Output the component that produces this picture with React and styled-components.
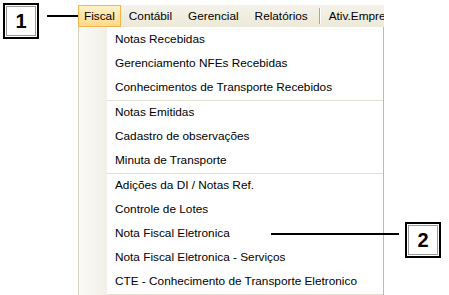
import React from "react";
import styled, { createGlobalStyle } from "styled-components";

const Global = createGlobalStyle`
  html, body { margin: 0; padding: 0; background: #fff; }
  body { font-family: "Liberation Sans", Arial, sans-serif; }
`;

const Page = styled.div`
  position: relative;
  width: 449px;
  height: 295px;
  overflow: hidden;
  background: #fff;
  padding: 5px 0 0 78px;
  box-sizing: border-box;
`;

const Window = styled.div`
  width: 306px;
  display: flex;
  flex-direction: column;
`;

const MenuBar = styled.div`
  height: 22px;
  display: flex;
  align-items: stretch;
  background: linear-gradient(#f4f2ea, #ece9d8);
  font-size: 11.8px;
  color: #000;
  overflow: hidden;
  white-space: nowrap;
`;

const BarItem = styled.div`
  display: flex;
  align-items: center;
  padding: 0 ${(p) => p.$pad ?? 8}px;
  box-sizing: border-box;
  flex-shrink: 0;
  ${(p) =>
    p.$active &&
    `
    border: 1px solid #f3b54a;
    background: linear-gradient(#fff2c8, #ffd98a);
  `}
`;

const BarSep = styled.div`
  width: 1px;
  flex-shrink: 0;
  margin: 3px 6px 3px 3px;
  background: #aca899;
  box-shadow: 1px 0 0 #fff;
`;

const Dropdown = styled.div`
  display: flex;
  border-left: 1px solid #d6d2c2;
  border-right: 1px solid #c2b8a8;
  height: 280px;
`;

const Gutter = styled.div`
  width: 28px;
  background: linear-gradient(90deg, #fbfaf6, #f1efe6);
`;

const Items = styled.div`
  flex: 1;
  background: #fff;
  display: flex;
  flex-direction: column;
  padding-top: 1px;
  font-size: 11.8px;
`;

const Item = styled.div`
  height: 24px;
  line-height: 23px;
  padding-left: 8px;
  color: #000;
  white-space: nowrap;
`;

const Sep = styled.div`
  height: 1px;
  flex-shrink: 0;
  background: #e3dfd2;
`;

const Callout = styled.div`
  position: absolute;
  left: ${(p) => p.$x}px;
  top: ${(p) => p.$y}px;
  width: 36px;
  height: 36px;
  box-sizing: border-box;
  border: 2px solid #000;
  outline: 1px solid #9a9a9a;
  outline-offset: -4px;
  background: #fff;
  display: flex;
  align-items: center;
  justify-content: center;
  font-family: "Liberation Sans", Arial, sans-serif;
  font-weight: bold;
  font-size: 20px;
  color: #000;
`;

const Leader = styled.div`
  position: absolute;
  left: ${(p) => p.$x}px;
  top: ${(p) => p.$y}px;
  width: ${(p) => p.$w}px;
  height: 2px;
  background: #000;
`;

const groups = [
  ["Notas Recebidas", "Gerenciamento NFEs Recebidas", "Conhecimentos de Transporte Recebidos"],
  ["Notas Emitidas", "Cadastro de observações", "Minuta de Transporte"],
  [
    "Adições da DI / Notas Ref.",
    "Controle de Lotes",
    "Nota Fiscal Eletronica",
    "Nota Fiscal Eletronica - Serviços",
    "CTE - Conhecimento de Transporte Eletronico",
  ],
];

export default function App() {
  return (
    <>
      <Global />
      <Page>
        <Window>
          <MenuBar>
            <BarItem $active $pad={5}>Fiscal</BarItem>
            <BarItem>Contábil</BarItem>
            <BarItem>Gerencial</BarItem>
            <BarItem>Relatórios</BarItem>
            <BarSep />
            <BarItem $pad={3}>Ativ.Empresariais</BarItem>
          </MenuBar>
          <Dropdown>
            <Gutter />
            <Items>
              {groups.map((g, gi) => (
                <React.Fragment key={gi}>
                  {gi > 0 && <Sep />}
                  {g.map((t) => (
                    <Item key={t}>{t}</Item>
                  ))}
                </React.Fragment>
              ))}
              <Sep />
            </Items>
          </Dropdown>
        </Window>
        <Callout $x={3} $y={3}>1</Callout>
        <Leader $x={47} $y={15} $w={31} />
        <Callout $x={405} $y={222}>2</Callout>
        <Leader $x={271} $y={233} $w={128} />
      </Page>
    </>
  );
}
